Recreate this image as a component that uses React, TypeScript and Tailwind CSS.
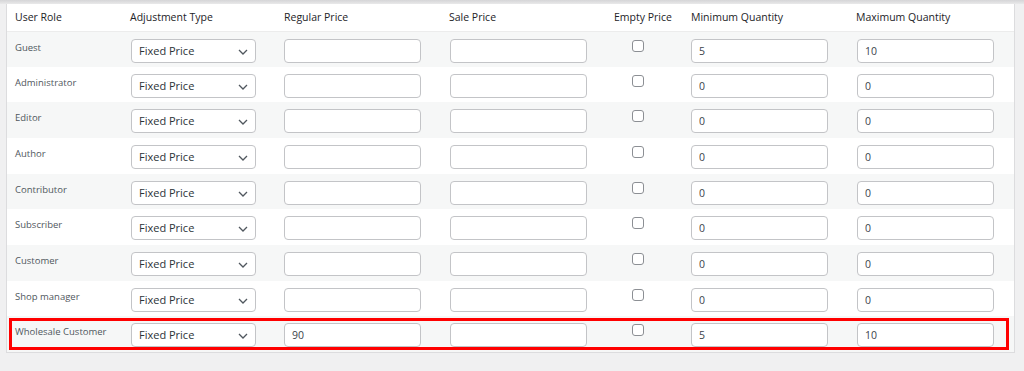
import { Fragment } from "react";

type Row = {
  role: string;
  regular?: string;
  min: string;
  max: string;
};

const rows: Row[] = [
  { role: "Guest", min: "5", max: "10" },
  { role: "Administrator", min: "0", max: "0" },
  { role: "Editor", min: "0", max: "0" },
  { role: "Author", min: "0", max: "0" },
  { role: "Contributor", min: "0", max: "0" },
  { role: "Subscriber", min: "0", max: "0" },
  { role: "Customer", min: "0", max: "0" },
  { role: "Shop manager", min: "0", max: "0" },
  { role: "Wholesale Customer", regular: "90", min: "5", max: "10" },
];

const inputClasses = "block h-[24px] w-[137px] rounded-[4px] border border-[#c3c4c7] bg-white px-[7px] text-[10.5px] text-[#3c434a] outline-none";

function Chevron() {
  return (
    <svg width="10" height="6" viewBox="0 0 10 6" className="absolute right-[7px] top-[9px]">
      <polyline points="1,1 5,5 9,1" fill="none" stroke="#50575e" strokeWidth="1.3" />
    </svg>
  );
}

export default function App() {
  return (
    <div className="h-[371px] w-[1024px] bg-[#f0f0f1]" style={{ fontFamily: '"Open Sans", "Noto Sans", sans-serif' }}>
      <div className="h-[4px] bg-gradient-to-b from-[#d5d5d7] to-[#e9e9ea]" />
      <div className="relative ml-[6px] w-[1009px] border border-t-0 border-[#dcdcde] bg-white">
        <table className="w-[1007px] table-fixed border-collapse">
          <colgroup>
            <col className="w-[116px]" />
            <col className="w-[154px]" />
            <col className="w-[165px]" />
            <col className="w-[165px]" />
            <col className="w-[77px]" />
            <col className="w-[165px]" />
            <col className="w-[165px]" />
          </colgroup>
          <thead>
            <tr className="h-[27px] border-b border-[#ececec] text-left text-[10.5px] font-normal text-[#1d2327]">
              <th className="pl-[8px] pt-[2px] font-normal">User Role</th>
              <th className="pl-[7px] pt-[2px] font-normal">Adjustment Type</th>
              <th className="pl-[7px] pt-[2px] font-normal">Regular Price</th>
              <th className="pl-[7px] pt-[2px] font-normal">Sale Price</th>
              <th className="pl-[7px] pt-[2px] font-normal">Empty Price</th>
              <th className="pl-[7px] pt-[2px] font-normal">Minimum Quantity</th>
              <th className="pl-[7px] pt-[2px] font-normal">Maximum Quantity</th>
            </tr>
          </thead>
          <tbody>
            {rows.map((row, i) => (
              <Fragment key={row.role}>
                <tr className={i % 2 === 0 ? "h-[35.67px] bg-[#f6f7f7]" : "h-[35.67px] bg-white"}>
                  <td className="pl-[8px] pt-[9px] align-top text-[9.5px] leading-[14px] text-[#50575e]">{row.role}</td>
                  <td className="pl-[8px] pt-[7px] align-top">
                    <div className="relative h-[24px] w-[125px] rounded-[4px] border border-[#c3c4c7] bg-white pl-[7px] text-[11px] leading-[22px] text-[#2c3338]">
                      Fixed Price
                      <Chevron />
                    </div>
                  </td>
                  <td className="pl-[7px] pt-[7px] align-top">
                    <input className={inputClasses} defaultValue={row.regular ?? ""} readOnly />
                  </td>
                  <td className="pl-[8px] pt-[7px] align-top">
                    <input className={inputClasses} defaultValue="" readOnly />
                  </td>
                  <td className="pl-[25px] pt-[8px] align-top">
                    <div className="h-[12px] w-[12px] rounded-[3px] border border-[#8c8f94] bg-white" />
                  </td>
                  <td className="pl-[7px] pt-[7px] align-top">
                    <input className={inputClasses} defaultValue={row.min} readOnly />
                  </td>
                  <td className="pl-[8px] pt-[7px] align-top">
                    <input className={inputClasses} defaultValue={row.max} readOnly />
                  </td>
                </tr>
              </Fragment>
            ))}
          </tbody>
        </table>
        <div className="pointer-events-none absolute bottom-[2px] left-[2px] h-[32px] w-[1000px] border-[3px] border-[#ff0000]" />
      </div>
    </div>
  );
}
